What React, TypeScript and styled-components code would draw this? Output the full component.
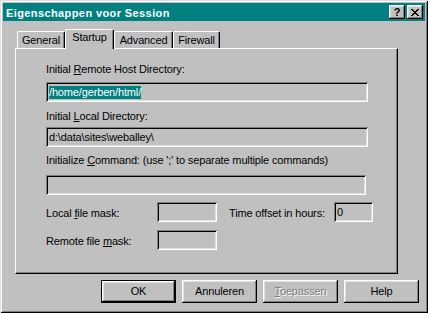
import React from 'react';
import styled, { createGlobalStyle } from 'styled-components';

const GlobalStyle = createGlobalStyle`
  html, body { margin: 0; padding: 0; background: #c0c0c0; }
  body {
    font-family: "Liberation Sans", Arial, sans-serif;
    font-size: 11px;
    letter-spacing: -0.15px;
    color: #000;
  }
`;

const Window = styled.div`
  box-sizing: border-box;
  width: 428px;
  height: 313px;
  padding: 3px;
  background: #c0c0c0;
  box-shadow: inset 1px 1px #dfdfdf, inset -1px -1px #000, inset 2px 2px #fff,
    inset -2px -2px #808080;
  display: flex;
  flex-direction: column;
`;

const TitleBar = styled.div`
  height: 18px;
  background: #008080;
  display: flex;
  align-items: center;
  padding: 0 2px 0 2px;
  gap: 2px;
`;

const TitleText = styled.span`
  flex: 1;
  color: #fff;
  font-weight: bold;
  font-size: 11px;
  letter-spacing: 0.4px;
  line-height: 16px;
  padding-top: 2px;
  padding-left: 1px;
  white-space: nowrap;
`;

const TitleButton = styled.div`
  box-sizing: border-box;
  width: 16px;
  height: 14px;
  background: #c0c0c0;
  box-shadow: inset -1px -1px #000, inset 1px 1px #fff, inset -2px -2px #808080,
    inset 2px 2px #dfdfdf;
  display: flex;
  align-items: center;
  justify-content: center;
  font-weight: bold;
  font-size: 11px;
  line-height: 12px;
  letter-spacing: 0;
`;

const Body = styled.div`
  flex: 1;
  display: flex;
  flex-direction: column;
  padding: 8px 0 0 12px;
`;

const TabStrip = styled.div`
  height: 19px;
  display: flex;
  align-items: flex-end;
  padding-left: 2px;
`;

const Tab = styled.div<{ $active?: boolean; $w: number }>`
  box-sizing: border-box;
  width: ${(p) => p.$w}px;
  height: ${(p) => (p.$active ? 20 : 17)}px;
  margin-bottom: ${(p) => (p.$active ? -1 : 0)}px;
  position: relative;
  z-index: ${(p) => (p.$active ? 1 : 0)};
  background: #c0c0c0;
  border-top: 1px solid #fff;
  border-left: 1px solid #fff;
  border-right: 1px solid #000;
  border-top-left-radius: 2px;
  border-top-right-radius: 2px;
  box-shadow: inset -1px 0 #808080;
  display: flex;
  justify-content: center;
  padding-top: ${(p) => (p.$active ? 1 : 2)}px;
  line-height: 13px;
  white-space: nowrap;
`;

const Panel = styled.div`
  box-sizing: border-box;
  width: 383px;
  height: 226px;
  border-top: 1px solid #fff;
  border-left: 1px solid #fff;
  border-right: 1px solid #000;
  border-bottom: 1px solid #000;
  box-shadow: inset -1px -1px #808080;
  padding: 14px 0 0 30px;
  display: flex;
  flex-direction: column;
  align-items: flex-start;
`;

const Label = styled.div<{ $mt?: number; $w?: number; $ml?: number }>`
  margin-top: ${(p) => p.$mt ?? 0}px;
  margin-left: ${(p) => p.$ml ?? 0}px;
  width: ${(p) => (p.$w ? `${p.$w}px` : 'auto')};
  line-height: 13px;
  white-space: nowrap;
`;

const RowLabel = styled(Label)`
  padding-top: 5px;
`;

const Key = styled.span`
  text-decoration: underline;
  text-underline-offset: 1px;
`;

const Field = styled.div<{ $w: number; $mt?: number; $ml?: number }>`
  box-sizing: border-box;
  width: ${(p) => p.$w}px;
  height: 20px;
  margin-top: ${(p) => p.$mt ?? 0}px;
  margin-left: ${(p) => p.$ml ?? 0}px;
  background: #c0c0c0;
  box-shadow: inset 1px 1px #808080, inset -1px -1px #fff, inset 2px 2px #000,
    inset -2px -2px #dfdfdf;
  padding: 4px 3px 0 3px;
  line-height: 13px;
  white-space: nowrap;
  overflow: hidden;
`;

const Selected = styled.span`
  display: inline-block;
  line-height: 13px;
  background: #008080;
  color: #fff;
`;

const Row = styled.div<{ $mt: number }>`
  display: flex;
  align-items: flex-start;
  margin-top: ${(p) => p.$mt}px;
`;

const ButtonRow = styled.div`
  display: flex;
  justify-content: flex-end;
  gap: 6px;
  margin-top: 6px;
  padding-right: 6px;
`;

const Button = styled.div<{ $default?: boolean; $disabled?: boolean }>`
  box-sizing: border-box;
  width: 75px;
  height: 23px;
  background: #c0c0c0;
  border: ${(p) => (p.$default ? '1px solid #000' : 'none')};
  box-shadow: inset -1px -1px #000, inset 1px 1px #fff, inset -2px -2px #808080,
    inset 2px 2px #dfdfdf;
  display: flex;
  align-items: center;
  justify-content: center;
  line-height: 13px;
  padding-bottom: 1px;
  color: ${(p) => (p.$disabled ? '#808080' : '#000')};
  text-shadow: ${(p) => (p.$disabled ? '1px 1px #fff' : 'none')};
`;

const CloseGlyph = () => (
  <svg width="8" height="7" viewBox="0 0 8 7" shapeRendering="crispEdges">
    <path
      d="M0 0h2v1H0zM6 0h2v1H6zM1 1h2v1H1zM5 1h2v1H5zM2 2h4v1H2zM3 3h2v1H3zM2 4h4v1H2zM1 5h2v1H1zM5 5h2v1H5zM0 6h2v1H0zM6 6h2v1H6z"
      fill="#000"
    />
  </svg>
);

export default function App() {
  return (
    <>
      <GlobalStyle />
      <Window>
        <TitleBar>
          <TitleText>Eigenschappen voor Session</TitleText>
          <TitleButton>?</TitleButton>
          <TitleButton>
            <CloseGlyph />
          </TitleButton>
        </TitleBar>
        <Body>
          <TabStrip>
            <Tab $w={48}>General</Tab>
            <Tab $w={49} $active>
              Startup
            </Tab>
            <Tab $w={59}>Advanced</Tab>
            <Tab $w={47}>Firewall</Tab>
          </TabStrip>
          <Panel>
            <Label>
              Initial <Key>R</Key>emote Host Directory:
            </Label>
            <Field $w={322} $mt={6}>
              <Selected>/home/gerben/html/</Selected>
            </Field>
            <Label $mt={8}>
              Initial <Key>L</Key>ocal Directory:
            </Label>
            <Field $w={322} $mt={4}>
              d:\data\sites\weballey\
            </Field>
            <Label $mt={7}>
              Initialize <Key>C</Key>ommand: (use ';' to separate multiple commands)
            </Label>
            <Field $w={320} $mt={8}>
              {''}
            </Field>
            <Row $mt={7}>
              <RowLabel $w={111}>
                Local <Key>f</Key>ile mask:
              </RowLabel>
              <Field $w={60} />
              <RowLabel $w={105} $ml={12}>
                Time offset in hours:
              </RowLabel>
              <Field $w={39}>0</Field>
            </Row>
            <Row $mt={8}>
              <RowLabel $w={111}>
                Remote file <Key>m</Key>ask:
              </RowLabel>
              <Field $w={60} />
            </Row>
          </Panel>
          <ButtonRow>
            <Button $default>OK</Button>
            <Button>Annuleren</Button>
            <Button $disabled>
              <span>
                <Key>T</Key>oepassen
              </span>
            </Button>
            <Button>Help</Button>
          </ButtonRow>
        </Body>
      </Window>
    </>
  );
}
